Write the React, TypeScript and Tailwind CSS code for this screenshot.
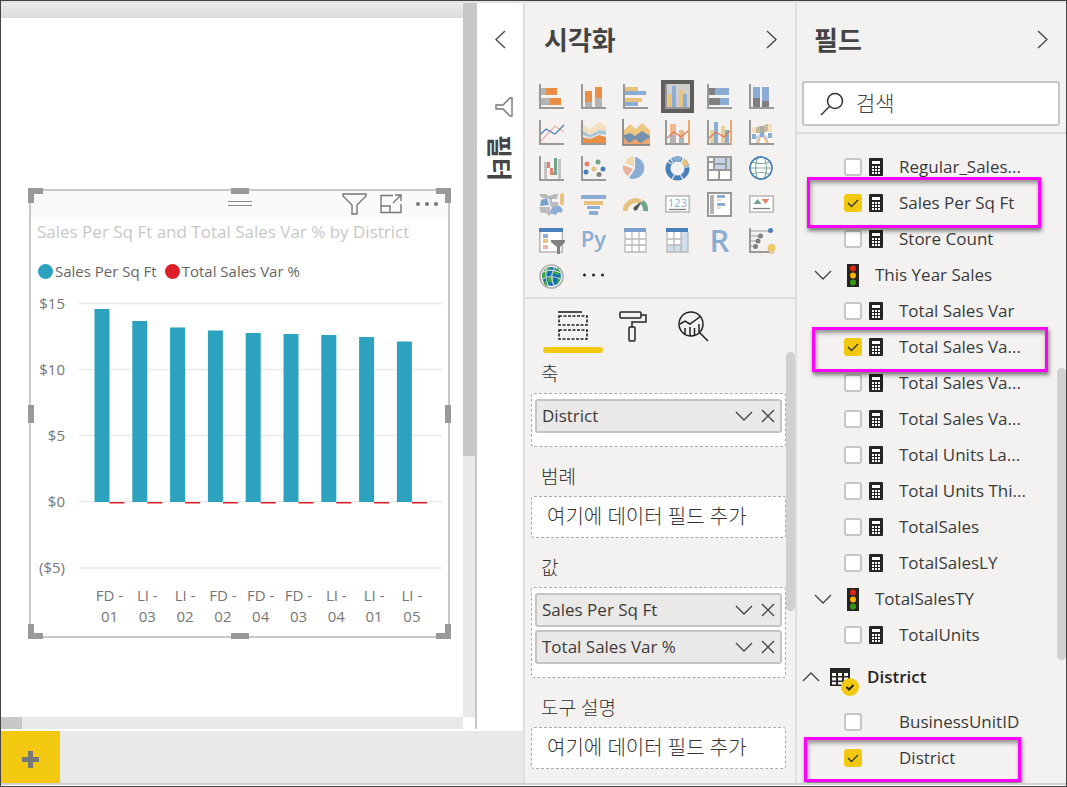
import React from "react";

const LATIN = "font-['Open_Sans','Noto_Sans_CJK_KR',sans-serif]";

const axis = "M1 0V24H25";

function Axis() {
  return <path d={axis} fill="none" stroke="#999" strokeWidth="2" />;
}

function Glyph({ children }: { children: React.ReactNode }) {
  return (
    <svg width="25" height="25" viewBox="0 0 25 25" className="overflow-visible" aria-hidden="true">
      {children}
    </svg>
  );
}

type Visual = { name: string; art: React.ReactNode; selected?: boolean };

const VISUALS: Visual[] = [
  {
    name: "Stacked bar chart",
    art: (
      <>
        <path d="M2 4h5v7H2zM2 14h9v7H2z" fill="#b3b3b3" />
        <path d="M7 4h11v7H7zM11 14h11v7H11z" fill="#e88f45" />
        <Axis />
      </>
    ),
  },
  {
    name: "Stacked column chart",
    art: (
      <>
        <path d="M4 18h7v5H4zM14 14h7v9h-7z" fill="#b3b3b3" />
        <path d="M4 7h7v11H4zM14 3h7v11h-7z" fill="#e88f45" />
        <Axis />
      </>
    ),
  },
  {
    name: "Clustered bar chart",
    art: (
      <>
        <path d="M2 3h13v4H2zM2 14h17v4H2z" fill="#e9c27f" />
        <path d="M2 7h21v4H2zM2 18h13v4H2z" fill="#8badd3" />
        <Axis />
      </>
    ),
  },
  {
    name: "Clustered column chart",
    selected: true,
    art: (
      <>
        <path d="M3 10h4v13H3zM14 6h4v17h-4z" fill="#e9c27f" />
        <path d="M7 2h4v21H7zM18 10h4v13h-4z" fill="#8badd3" />
        <Axis />
      </>
    ),
  },
  {
    name: "100% stacked bar chart",
    art: (
      <>
        <path d="M2 4h6v7H2zM2 14h11v7H2z" fill="#808080" />
        <path d="M8 4h14v7H8zM13 14h9v7h-9z" fill="#8badd3" />
        <Axis />
      </>
    ),
  },
  {
    name: "100% stacked column chart",
    art: (
      <>
        <path d="M4 14h7v9H4zM13 17h7v6h-7z" fill="#808080" />
        <path d="M4 3h7v11H4zM13 3h7v14h-7z" fill="#8badd3" />
        <Axis />
      </>
    ),
  },
  {
    name: "Line chart",
    art: (
      <>
        <path d="M2 21L16 6l9 6" fill="none" stroke="#ecb0a3" strokeWidth="1.3" />
        <path d="M2 14l5-5 9 5 9-9" fill="none" stroke="#4a80ba" strokeWidth="1.3" />
        <Axis />
      </>
    ),
  },
  {
    name: "Area chart",
    art: (
      <>
        <path d="M2 5l7 4 9-7 7 4v6l-7-2-9 5-7-4z" fill="#f3dfbd" />
        <path d="M2 11l7 4 9-5 7 1v4l-7-1-9 4-7-3z" fill="#a9c6d6" />
        <path d="M2 17l7 2 9-4 7 2v6H2z" fill="#e88f45" />
        <Axis />
      </>
    ),
  },
  {
    name: "Stacked area chart",
    art: (
      <>
        <path d="M1 10l6-6 6 5 6-6 8 7v14H1z" fill="#efc782" />
        <path d="M1 15l6-2 5 3 7-5 8 5v8H1z" fill="#7492ad" />
        <path d="M1 18l5 5 6-4 6 4 9-6v8H1z" fill="#f0a56c" />
        <path d="M6 23l6-5 6 5" fill="none" stroke="#7492ad" />
        <path d="M0-1V25H27" fill="none" stroke="#777" strokeWidth="1.6" />
      </>
    ),
  },
  {
    name: "Line and stacked column chart",
    art: (
      <>
        <path d="M5 4h6v11H5zM14 10h5v8h-5z" fill="#f0b98d" />
        <path d="M5 15h6v8H5zM14 18h5v5h-5z" fill="#b3b3b3" />
        <path d="M2 18l7-6 7 5 7-6" fill="none" stroke="#df7451" strokeWidth="1.2" />
        <Axis />
        <path d="M23 0h2v25h-2z" fill="#f0a56c" />
      </>
    ),
  },
  {
    name: "Line and clustered column chart",
    art: (
      <>
        <path d="M3 10h4v13H3zM14 6h4v17h-4z" fill="#e9cf9a" />
        <path d="M7 2h4v21H7zM18 10h4v13h-4z" fill="#8badd3" />
        <path d="M2 18l7-6 8 5 6-6" fill="none" stroke="#df7451" strokeWidth="1.2" />
        <Axis />
        <path d="M23 0h2v25h-2z" fill="#f0a56c" />
      </>
    ),
  },
  {
    name: "Ribbon chart",
    art: (
      <>
        <path d="M3 6h20v17H3z" fill="#fff" />
        <path d="M3 7h6v6H3z" fill="#f3dfbd" />
        <path d="M7 7l4-1v7H7zM15 5l4-1v7l-4 2z" fill="#c9b99a" />
        <path d="M11 6h4v7h-4z" fill="#aaa" />
        <path d="M19 4h4v8h-4z" fill="#f3dfbd" />
        <path d="M3 14h4v5H3zM11 13h4v4h-4zM19 13h4v5h-4z" fill="#8badd3" />
        <path d="M7 17l4-4v4l-4 4zM15 13l4 5v3l-4-4z" fill="#c3d5ea" />
        <path d="M7 23l3-6h2l-2 6zM14 17h2l4 6h-3z" fill="#f0b98d" />
        <Axis />
      </>
    ),
  },
  {
    name: "Waterfall chart",
    art: (
      <>
        <path d="M5 6h3v17H5zM19 3h3v20h-3z" fill="#c4c4c4" />
        <path d="M8 6h3v6h3v7h2v-3h-5v-4H8z" fill="#e3836f" />
        <path d="M11 12h3v7h-3z" fill="#e3836f" />
        <path d="M15 2h3v17h-3z" fill="#6ea58c" />
        <Axis />
      </>
    ),
  },
  {
    name: "Scatter chart",
    art: (
      <>
        <circle cx="6" cy="8" r="2.5" fill="#e3836f" />
        <circle cx="17" cy="6" r="2.5" fill="#6ea58c" />
        <circle cx="5" cy="16" r="2.5" fill="#4a80ba" />
        <circle cx="13" cy="13" r="2.5" fill="#e9c27f" />
        <circle cx="22" cy="13" r="2.5" fill="#4a80ba" />
        <circle cx="18" cy="18.500" r="2.5" fill="#808080" />
        <Axis />
      </>
    ),
  },
  {
    name: "Pie chart",
    art: (
      <>
        <path d="M12 1a11 11 0 1 1-6 21l6-9z" fill="#8badd3" />
        <path d="M11 0v11L2 7a11 11 0 0 1 9-7z" fill="#f0d9b0" />
        <path d="M0 9l10 4-5 7a11 11 0 0 1-5-11z" fill="#e9b0a0" />
      </>
    ),
  },
  {
    name: "Donut chart",
    art: (
      <g fill="none" strokeWidth="5">
        <circle cx="12.500" cy="12.500" r="9.500" stroke="#4a80ba" />
        <path d="M8 4a9.500 9.500 0 0 1 8-.5" stroke="#8badd3" />
        <path d="M17 4.200a9.500 9.500 0 0 1 4.500 5.800" stroke="#e9c27f" />
        <path d="M8 7L5 1M16 7l2.500-6M20 11.500l6-1.500M15.500 19l3 5M9.500 19l-3 5M6.500 8L1 4.500" stroke="#f3f2f1" strokeWidth="1.2" />
      </g>
    ),
  },
  {
    name: "Treemap",
    art: (
      <>
        <path d="M1 1h23v23H1z" fill="#fff" />
        <path d="M7 1h17v13H7z" fill="#c3d3e8" />
        <path d="M1 1h23v23H1zM7 1v13M1 14h23M7 8h12M19 1v13M12 14v10M1 6h6" fill="none" stroke="#999" strokeWidth="2" />
      </>
    ),
  },
  {
    name: "Map",
    art: (
      <>
        <circle cx="12" cy="12" r="11" fill="#fff" stroke="#4a80ba" strokeWidth="1.300" />
        <path d="M1 12h22M3 6q9 3 18 0M3 18q9-3 18 0M9 1q-5 11 0 22M15 1q5 11 0 22" fill="none" stroke="#82b19d" strokeWidth="1.200" />
        <circle cx="12" cy="12" r="11" fill="none" stroke="#4a80ba" strokeWidth="1.300" />
      </>
    ),
  },
  {
    name: "Filled map",
    art: (
      <>
        <path d="M0 2h7l3 2 6-2h3l-1 5h-8l-2-1H3z" fill="#b8b8b8" />
        <path d="M10 7h3v3h6l1 5h-8l-1-3zM0 15h11v3l2 3-3 3-3-3H2z" fill="#bcbcbc" />
        <path d="M2 8l6-2 2 7-9 1z" fill="#7ba0cb" />
        <path d="M13 15l8-1 3 4-2 3-3-1-2 3-6-2z" fill="#8badd3" />
        <path d="M21 2l4-1v11l-2 2-2-2z" fill="#e9c27f" />
        <path d="M0 14.500h11" stroke="#f3f2f1" fill="none" />
      </>
    ),
  },
  {
    name: "Funnel",
    art: (
      <>
        <path d="M0 3h25v4H0zM6 14h13v3H6zM8 19h9v4H8z" fill="#8badd3" />
        <path d="M3 9h19v4H3z" fill="#e9c27f" />
      </>
    ),
  },
  {
    name: "Gauge",
    art: (
      <>
        <path d="M2.500 19a10 10 0 0 1 15-9" fill="none" stroke="#e9c27f" strokeWidth="5" />
        <path d="M19 10a10 10 0 0 1 3.500 9" fill="none" stroke="#6ea58c" strokeWidth="5" />
        <path d="M19 9l-5 9a2 2 0 1 1-3-3z" fill="#555" />
      </>
    ),
  },
  {
    name: "Card",
    art: (
      <>
        <path d="M.8 4h23.500v16H.8z" fill="#fff" stroke="#b8b8b8" strokeWidth="1.600" />
        <text x="12.500" y="14.500" fontSize="11" textAnchor="middle" fill="#8badd3" fontFamily="Open Sans">123</text>
        <path d="M4 17.500h17" stroke="#808080" strokeWidth="1.300" />
      </>
    ),
  },
  {
    name: "Multi-row card",
    art: (
      <>
        <path d="M1 1h23v23H1z" fill="#fff" stroke="#999" strokeWidth="2" />
        <path d="M3 3h4v19H3z" fill="#b3b3b3" />
        <path d="M10 3h8v3h-8zM10 11h8v3h-8z" fill="#8badd3" />
        <path d="M10 8h4M10 16h4" stroke="#bbb" />
      </>
    ),
  },
  {
    name: "KPI",
    art: (
      <>
        <path d="M.8 4h23.500v16H.8z" fill="#fff" stroke="#b8b8b8" strokeWidth="1.600" />
        <path d="M4.500 12l4-5 4 5z" fill="#6ea58c" />
        <path d="M12.500 7h8l-4 5z" fill="#e3836f" />
        <path d="M4 16.500h17" stroke="#808080" strokeWidth="1.300" />
      </>
    ),
  },
  {
    name: "Slicer",
    art: (
      <>
        <path d="M.8 1h22.500v23H.8z" fill="#fff" stroke="#b8b8b8" strokeWidth="1.600" />
        <path d="M0 0h24v4H0z" fill="#4a80ba" />
        <path d="M4 6h5v4H4z" fill="#8badd3" />
        <path d="M4 11h5v4H4z" fill="#e9c27f" />
        <path d="M4 17h5v4H4z" fill="#ecb8ac" />
        <path d="M12 12h14v2l-5 5v7h-3v-7l-6-5z" fill="#808080" />
      </>
    ),
  },
  {
    name: "Python visual",
    art: (
      <text x="12.500" y="19" fontSize="22" fontWeight="600" textAnchor="middle" fill="#8badd3" fontFamily="Open Sans">
        Py
      </text>
    ),
  },
  {
    name: "Table",
    art: (
      <>
        <path d="M2 1h21v23H2z" fill="#fff" />
        <path d="M2 4v20h21V4M2 11h21M2 17h21M9 4v20M16 4v20" fill="none" stroke="#b8b8b8" strokeWidth="1.300" />
        <path d="M1 0h22v4H1z" fill="#7ba0cb" />
      </>
    ),
  },
  {
    name: "Matrix",
    art: (
      <>
        <path d="M2 1h21v23H2z" fill="#fff" />
        <path d="M16 4h7v20H2v-7h14z" fill="#cfdeed" />
        <path d="M2 4v20h21V4M2 11h14M2 17h14M9 4v20M16 4v20" fill="none" stroke="#b8b8b8" strokeWidth="1.300" />
        <path d="M1 0h22v4H1z" fill="#4a80ba" />
      </>
    ),
  },
  {
    name: "R script visual",
    art: (
      <text x="12.500" y="24" fontSize="31" fontWeight="600" textAnchor="middle" fill="#8badd3" fontFamily="Open Sans">
        R
      </text>
    ),
  },
  {
    name: "Key influencers",
    art: (
      <>
        <path d="M2 3h18M2 8h8M2 13h6M2 18h4" stroke="#b8b8b8" strokeWidth="1.300" />
        <Axis />
        <circle cx="21.500" cy="2.500" r="2.500" fill="#4a80ba" />
        <circle cx="11.500" cy="8" r="2.500" fill="#808080" />
        <circle cx="9" cy="13" r="2.500" fill="#808080" />
        <circle cx="6.500" cy="18.500" r="2.500" fill="#808080" />
        <circle cx="22.500" cy="20" r="4" fill="#efc766" />
        <path d="M20.500 23h4v3h-4z" fill="#e5cf9f" />
      </>
    ),
  },
  {
    name: "ArcGIS map",
    art: (
      <>
        <circle cx="12.500" cy="12.500" r="11.500" fill="#fff" stroke="#aaa" strokeWidth="1.600" />
        <circle cx="12.500" cy="12.500" r="9.500" fill="#0f6cb8" />
        <path d="M3 10l3-5 4-2 2 2-5 5-1 4-3 1zM14 7l5-3 3 5-4 2-3-1zM9 13l5-1 1 3-3 4-3-1zM19 13l3-1-2 6-3 2zM4 17l4 1 1 4-3-1z" fill="#39a845" />
        <path d="M2 9q10-6 21 1M2 16q10-7 21 0M8 2q-3 10 2 22M17 2q-8 10-1 21" fill="none" stroke="#c5d2d8" strokeWidth="1.200" />
      </>
    ),
  },
  {
    name: "More visuals",
    art: (
      <g fill="#222">
        <circle cx="3.500" cy="11" r="1.500" />
        <circle cx="12.500" cy="11" r="1.500" />
        <circle cx="21.500" cy="11" r="1.500" />
      </g>
    ),
  },
];

const DISTRICTS = [
  { type: "FD -", code: "01", top: 310 },
  { type: "LI -", code: "03", top: 322 },
  { type: "LI -", code: "02", top: 328.5 },
  { type: "FD -", code: "02", top: 331.5 },
  { type: "FD -", code: "04", top: 334 },
  { type: "FD -", code: "03", top: 335 },
  { type: "LI -", code: "04", top: 336 },
  { type: "LI -", code: "01", top: 338 },
  { type: "LI -", code: "05", top: 342.5 },
];

const TICKS = [
  { label: "$15", y: 304.5 },
  { label: "$10", y: 370.5 },
  { label: "$5", y: 436.5 },
  { label: "$0", y: 502.5 },
  { label: "($5)", y: 569 },
];

function Plot() {
  return (
    <svg
      className="block w-full"
      viewBox="31 289 417 348"
      role="img"
      aria-label="Sales Per Sq Ft and Total Sales Var % by District"
      fontFamily="Open Sans, sans-serif"
      fontSize="15"
      fill="#777"
    >
      {TICKS.map((t) => (
        <g key={t.label}>
          <path d={`M79 ${t.y}H442`} stroke="#e9e9e9" strokeWidth="1.500" />
          <text x="65" y={t.y + 5} textAnchor="end">
            {t.label}
          </text>
        </g>
      ))}
      {DISTRICTS.map((d, i) => {
        const x = 94.5 + 37.8 * i;
        return (
          <g key={i}>
            <rect x={x} y={d.top} width="15" height={503 - d.top} fill="#2ca2bf" />
            <rect x={x + 15} y="503" width="15" height="1.5" fill="#d9202a" />
            <text x={x + 15} y="602" textAnchor="middle">
              {d.type}
            </text>
            <text x={x + 15} y="623" textAnchor="middle">
              {d.code}
            </text>
          </g>
        );
      })}
    </svg>
  );
}

function Handles() {
  return (
    <>
      <i className="absolute -left-[3px] -top-[3px] h-[15px] w-[15px] border-l-[6px] border-t-[6px] border-[#999]" />
      <i className="absolute -right-[3px] -top-[3px] h-[15px] w-[15px] border-r-[6px] border-t-[6px] border-[#999]" />
      <i className="absolute -bottom-[3px] -left-[3px] h-[15px] w-[15px] border-b-[6px] border-l-[6px] border-[#999]" />
      <i className="absolute -bottom-[3px] -right-[3px] h-[15px] w-[15px] border-b-[6px] border-r-[6px] border-[#999]" />
      <i className="absolute -top-[3px] left-1/2 h-[6px] w-[18px] -translate-x-1/2 bg-[#999]" />
      <i className="absolute -bottom-[3px] left-1/2 h-[6px] w-[18px] -translate-x-1/2 bg-[#999]" />
      <i className="absolute -left-[3px] top-1/2 h-[18px] w-[6px] -translate-y-1/2 bg-[#999]" />
      <i className="absolute -right-[3px] top-1/2 h-[18px] w-[6px] -translate-y-1/2 bg-[#999]" />
    </>
  );
}

function ChartVisual() {
  return (
    <div className="relative border-2 border-[#c8c8c8] bg-white">
      <Handles />
      <div className="grid h-7 grid-cols-3 items-center bg-[#fafafa]">
        <span />
        <span className="mx-auto -mt-1 h-[5px] w-6 border-y border-[#888]" />
        <div className="flex items-center justify-end gap-[13px] pb-[2px] pr-[9px] text-[#777]">
          <button aria-label="Filters">
            <svg width="25" height="22" viewBox="0 0 25 22" fill="none" stroke="#777" strokeWidth="1.4">
              <path d="M1 1h23v2l-9 9v9h-5v-9L1 3z" />
            </svg>
          </button>
          <button aria-label="Focus mode">
            <svg width="22" height="20" viewBox="0 0 22 20" fill="none" stroke="#777" strokeWidth="1.4">
              <path d="M13 1.500H1v17h20V10M1 12h9v6.500M13 9l8-8M15 1h6v6" />
            </svg>
          </button>
          <button aria-label="More options">
            <svg width="24" height="6" viewBox="0 0 24 6" fill="#777">
              <circle cx="3" cy="3" r="2" />
              <circle cx="12" cy="3" r="2" />
              <circle cx="21" cy="3" r="2" />
            </svg>
          </button>
        </div>
      </div>
      <h3 className="whitespace-nowrap pl-[6px] text-[17px] leading-[26px] text-[#c8c8c8]">
        Sales Per Sq Ft and Total Sales Var % by District
      </h3>
      <div className="mt-[13px] flex items-center gap-2 whitespace-nowrap pb-1 pl-[7px] text-[15px] leading-[26px] text-[#666]">
        <span className="flex items-center gap-[2px]">
          <i className="h-[15px] w-[15px] rounded-full bg-[#2ca2bf]" />
          Sales Per Sq Ft
        </span>
        <span className="flex items-center gap-[2px]">
          <i className="h-[15px] w-[15px] rounded-full bg-[#dc1f28]" />
          Total Sales Var %
        </span>
      </div>
      <Plot />
    </div>
  );
}

function Chevron({ dir }: { dir: "left" | "right" | "down" | "up" }) {
  const side = dir === "left" || dir === "right";
  const d = {
    left: "M10 1L1 9.500L10 18",
    right: "M1 1L10 9.500L1 18",
    down: "M1 1L9 9L17 1",
    up: "M1 9L9 1L17 9",
  }[dir];
  return (
    <svg
      width={side ? 11 : 18}
      height={side ? 19 : 10}
      viewBox={side ? "0 0 11 19" : "0 0 18 10"}
      fill="none"
      stroke="#444"
      strokeWidth="1.3"
      aria-hidden="true"
    >
      <path d={d} />
    </svg>
  );
}

function Chip({ name }: { name: string }) {
  return (
    <div className="flex h-[34px] items-center rounded-[3px] border-2 border-[#c4c4c4] bg-[#eae9e8] pl-[5px] pr-[5px]">
      <span className="flex-1 text-[17px] text-[#3b3b3b]">{name}</span>
      <button aria-label={`${name} options`} className="mr-2">
        <Chevron dir="down" />
      </button>
      <button aria-label={`Remove ${name}`}>
        <svg width="14" height="14" viewBox="0 0 14 14" stroke="#444" strokeWidth="1.3">
          <path d="M1 1l12 12M13 1L1 13" />
        </svg>
      </button>
    </div>
  );
}

function Well({ label, chips }: { label: string; chips?: string[] }) {
  return (
    <section className="pt-[18px]">
      <h3 className="mb-[7px] pl-[10px] text-[19px] font-light leading-6 text-[#333]">{label}</h3>
      {chips ? (
        <div className="flex flex-col gap-[3px] rounded-[3px] border border-dashed border-[#aaa] bg-white px-[3px] pb-[13px] pt-[5px]">
          {chips.map((c) => (
            <Chip key={c} name={c} />
          ))}
        </div>
      ) : (
        <div className="flex h-[42px] items-center rounded-[3px] border border-dashed border-[#aaa] bg-white pl-[15px] text-[20px] font-light text-[#333]">
          여기에 데이터 필드 추가
        </div>
      )}
    </section>
  );
}

function VisualizationsPane() {
  return (
    <section className="flex w-[272px] shrink-0 flex-col border-l-2 border-[#e1dfdd] bg-[#f3f2f1]">
      <header className="flex h-[75px] shrink-0 items-center justify-between pl-[19px] pr-[18px]">
        <h2 className="text-[26px] font-bold text-[#444]">시각화</h2>
        <button aria-label="Collapse visualizations" className="pb-[2px]">
          <Chevron dir="right" />
        </button>
      </header>
      <div className="ml-[5px] grid w-[252px] shrink-0 grid-cols-6 pb-[3px]">
        {VISUALS.map((v) => (
          <button key={v.name} aria-label={v.name} className="flex h-9 items-center justify-center">
            <span
              className={
                v.selected
                  ? "flex h-[33px] w-[33px] items-center justify-center border-4 border-[#5f5e5c] bg-[#d0cfce]"
                  : "flex h-[33px] w-[33px] items-center justify-center"
              }
            >
              <Glyph>{v.art}</Glyph>
            </span>
          </button>
        ))}
      </div>
      <div className="flex h-[55px] shrink-0 items-start border-t-2 border-[#dddcdb] pl-[18px]">
        <button aria-label="Fields" className="flex h-[54px] w-[60px] flex-col items-center justify-between pt-3">
          <svg width="30" height="30" viewBox="0 0 30 30" fill="none" stroke="#222" strokeWidth="1.6">
            <path d="M0 1h24" />
            <path d="M1 5h28v9H1zM1 19h28v9H1z" strokeDasharray="3 1.500" />
          </svg>
          <span className="h-[6px] w-[60px] rounded-full bg-[#f2c811]" />
        </button>
        <button aria-label="Format" className="flex w-[60px] justify-center pt-3">
          <svg width="28" height="31" viewBox="0 0 28 31" fill="none" stroke="#222" strokeWidth="1.500">
            <rect x="1" y="1" width="21" height="6" rx="1" />
            <path d="M22 4h5v7H13v5" />
            <rect x="10" y="16" width="6" height="14" rx="1" />
          </svg>
        </button>
        <button aria-label="Analytics" className="flex w-[60px] justify-center pt-3">
          <svg width="31" height="31" viewBox="0 0 31 31" fill="none" stroke="#222" strokeWidth="1.500">
            <circle cx="13" cy="13" r="12" />
            <path d="M21.500 21.500L30 30M2 13l5-3 5 3 11-8M7 24v-7M12 25v-9M16.500 25v-8M21 21v-8" />
          </svg>
        </button>
      </div>
      <div className="flex min-h-0 flex-1 overflow-hidden">
        <div className="-mt-2 flex-1 pl-[6px]">
          <Well label="축" chips={["District"]} />
          <Well label="범례" />
          <Well label="값" chips={["Sales Per Sq Ft", "Total Sales Var %"]} />
          <Well label="도구 설명" />
        </div>
        <div className="h-3/5 w-[9px] rounded-full bg-[#d2d0ce]" />
      </div>
    </section>
  );
}

function Calculator() {
  return (
    <svg width="14" height="18" viewBox="0 0 14 18" aria-hidden="true">
      <rect width="14" height="18" rx="1" fill="#252423" />
      <path d="M3 3h8v3H3z" fill="#fff" />
      <path
        d="M3 8h2v2H3zM6 8h2v2H6zM9 8h2v2H9zM3 11h2v2H3zM6 11h2v2H6zM9 11h2v2H9zM3 14h2v2H3zM6 14h2v2H6zM9 14h2v2H9z"
        fill="#fff"
      />
    </svg>
  );
}

type Mark = "wide" | "tall" | "leaf";

const MARKS: Record<Mark, string> = {
  wide: "-top-2 left-[10px] right-4 h-[51px]",
  tall: "-top-[2px] left-[15px] right-[9px] h-[45px]",
  leaf: "-top-[3px] left-[7px] right-9 h-[45px]",
};

function FieldRow({ name, checked, plain, mark }: { name: string; checked?: boolean; plain?: boolean; mark?: Mark }) {
  return (
    <li className="relative h-9">
      <label className="flex h-9 items-center pl-[47px] text-[17px] text-[#3b3b3b]">
        <span className="relative mr-[7px] h-[18px] w-[18px]">
          <input
            type="checkbox"
            defaultChecked={checked}
            className="peer block h-[18px] w-[18px] appearance-none rounded-[3px] border-2 border-[#c8c6c4] bg-white checked:border-[#f2c811] checked:bg-[#f2c811]"
          />
          <svg
            className="pointer-events-none absolute inset-0 hidden peer-checked:block"
            width="18"
            height="18"
            viewBox="0 0 18 18"
            fill="none"
            stroke="#333"
            strokeWidth="1.300"
          >
            <path d="M4 9l3.500 3.500L14 6" />
          </svg>
        </span>
        <span className="mr-4 w-[14px]">{!plain && <Calculator />}</span>
        {name}
      </label>
      {mark && (
        <span
          className={`pointer-events-none absolute z-10 border-[3px] border-[#ff00ff] shadow-[1px_3px_4px_rgba(0,0,0,0.5),inset_1px_3px_4px_rgba(0,0,0,0.4)] ${MARKS[mark]}`}
        />
      )}
    </li>
  );
}

function GroupRow({ name }: { name: string }) {
  return (
    <li className="flex h-9 items-center pl-[17px] text-[17px] text-[#3b3b3b]">
      <button aria-label={`Expand ${name}`} className="mr-[15px]">
        <Chevron dir="down" />
      </button>
      <svg width="12" height="23" viewBox="0 0 12 23" className="mr-4" aria-hidden="true">
        <path d="M0 0h12v23H0z" fill="#252423" />
        <circle cx="6" cy="4.500" r="3" fill="#e02716" />
        <circle cx="6" cy="11.500" r="3" fill="#fdb201" />
        <circle cx="6" cy="18.500" r="3" fill="#3a9a16" />
      </svg>
      {name}
    </li>
  );
}

function FieldsPane() {
  return (
    <section className="flex w-[271px] shrink-0 flex-col border-l-2 border-[#e1dfdd] bg-[#f3f2f1]">
      <header className="flex h-[78px] shrink-0 items-center justify-between pb-[3px] pl-[17px] pr-[18px]">
        <h2 className="text-[26px] font-bold text-[#444]">필드</h2>
        <button aria-label="Collapse fields" className="pb-[2px]">
          <Chevron dir="right" />
        </button>
      </header>
      <div className="shrink-0 border-b-2 border-[#dddcdb] pb-[6px] pl-[5px] pr-[6px]">
        <label className="flex h-[45px] items-center rounded-[3px] border-2 border-[#c8c6c4] bg-white pl-4">
          <svg width="24" height="24" viewBox="0 0 24 24" fill="none" stroke="#333" strokeWidth="1.500">
            <circle cx="15" cy="9" r="7.500" />
            <path d="M9.500 14.500L1 23" />
          </svg>
          <input
            type="text"
            aria-label="검색"
            placeholder="검색"
            className="ml-3 w-full min-w-0 flex-1 bg-transparent text-[21px] font-light outline-none placeholder:text-[#444]"
          />
        </label>
      </div>
      <div className="flex min-h-0 flex-1 overflow-hidden">
        <ul className="min-w-0 flex-1 pt-[15px]">
          <FieldRow name="Regular_Sales..." />
          <FieldRow name="Sales Per Sq Ft" checked mark="wide" />
          <FieldRow name="Store Count" />
          <GroupRow name="This Year Sales" />
          <FieldRow name="Total Sales Var" />
          <FieldRow name="Total Sales Va..." checked mark="tall" />
          <FieldRow name="Total Sales Va..." />
          <FieldRow name="Total Sales Va..." />
          <FieldRow name="Total Units La..." />
          <FieldRow name="Total Units Thi..." />
          <FieldRow name="TotalSales" />
          <FieldRow name="TotalSalesLY" />
          <GroupRow name="TotalSalesTY" />
          <FieldRow name="TotalUnits" />
          <li className="mb-[3px] flex h-12 items-center pl-[5px] text-[17px] font-semibold text-[#252423]">
            <button aria-label="Collapse District" className="mr-[10px]">
              <Chevron dir="up" />
            </button>
            <svg width="29" height="28" viewBox="0 0 29 28" className="mr-2 mt-[10px]" aria-hidden="true">
              <path d="M0 0h20v18H0z" fill="#252423" />
              <path
                d="M2 5h4v3H2zM8 5h4v3H8zM14 5h4v3h-4zM2 9.500h4v3H2zM8 9.500h4v3H8zM14 9.500h4v3h-4zM2 14h4v2.500H2zM8 14h4v2.500H8z"
                fill="#fff"
              />
              <circle cx="20" cy="19" r="9" fill="#f2c811" />
              <path d="M16.500 19l2.500 2.500 4.500-4.500" fill="none" stroke="#252423" strokeWidth="2" />
            </svg>
            District
          </li>
          <FieldRow name="BusinessUnitID" plain />
          <FieldRow name="District" checked plain mark="leaf" />
        </ul>
        <div className="flex w-[9px] flex-col pt-[234px]">
          <div className="h-[292px] rounded-full bg-[#d2d0ce]" />
        </div>
      </div>
    </section>
  );
}

function FiltersPane() {
  return (
    <aside className="flex w-[46px] shrink-0 flex-col items-center bg-white pt-[27px]">
      <button aria-label="Expand filters">
        <Chevron dir="left" />
      </button>
      <svg width="18" height="20" viewBox="0 0 18 20" className="ml-2 mt-12" fill="none" stroke="#777" strokeWidth="1.4">
        <path d="M17 1v18h-2l-7-7H1V8h7l7-7z" />
      </svg>
      <h2 className="mt-[18px] text-[25px] font-bold leading-6 text-[#444] [text-orientation:sideways] [writing-mode:vertical-rl]">
        필터
      </h2>
    </aside>
  );
}

export default function App() {
  return (
    <div className={`h-screen overflow-hidden border border-[#444] bg-white pb-px ${LATIN}`}>
      <main className="flex h-full border-b-2 border-t-2 border-b-[#cfcfcf] border-t-[#e4e2e2]">
        <div className="flex min-w-0 flex-1 flex-col">
          <div className="flex min-h-0 flex-1">
            <div className="flex min-w-0 flex-1 flex-col">
              <div className="h-[15px] shrink-0 bg-linear-to-b from-[#ececec] to-[#dcdcdc]" />
              <div className="min-h-0 flex-1 pl-7 pr-[13px] pt-[171px]">
                <ChartVisual />
              </div>
              <div className="h-3 shrink-0 bg-[#e9e9e9]">
                <div className="h-3 w-[21px] bg-[#c8c8c8]" />
              </div>
            </div>
            <div className="flex w-[14px] shrink-0 flex-col border-r-2 border-[#c8c8c8]">
              <div className="-mr-[2px] h-[453px] bg-[#c8c8c8]" />
              <div className="mb-3 flex-1 bg-[#e9e9e9]" />
            </div>
            <FiltersPane />
          </div>
          <footer className="mt-[2px] flex h-[52px] shrink-0 bg-[#e9e9e9]">
            <button aria-label="New page" className="flex w-[59px] items-center justify-center bg-[#f2c811] pt-1">
              <svg width="17" height="17" viewBox="0 0 17 17" stroke="#777" strokeWidth="5">
                <path d="M8.500 0v17M0 8.500h17" />
              </svg>
            </button>
          </footer>
        </div>
        <VisualizationsPane />
        <FieldsPane />
      </main>
    </div>
  );
}
